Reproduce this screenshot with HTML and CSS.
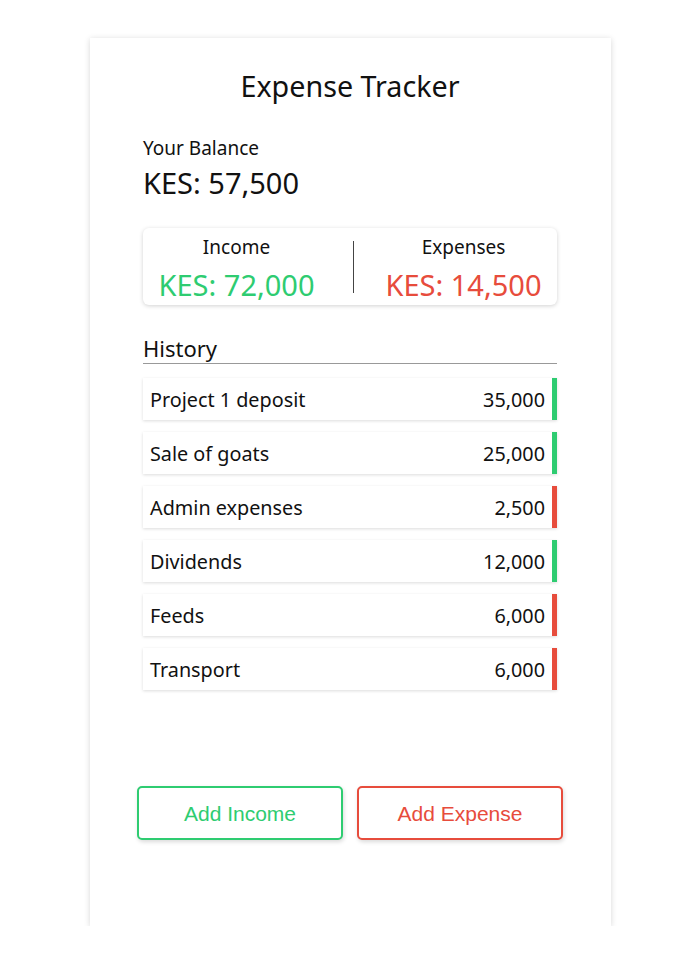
FILE: index.html
```html
<!DOCTYPE html>
<html lang="en">
<head>
<meta charset="utf-8">
<title>Expense Tracker</title>
<link rel="stylesheet" href="styles.css">
</head>
<body>
<div class="card">
  <h2 class="title">Expense Tracker</h2>
  <div class="balance-label">Your Balance</div>
  <div class="balance">KES: 57,500</div>
  <div class="summary">
    <div class="summary-col">
      <div class="summary-label">Income</div>
      <div class="summary-value plus">KES: 72,000</div>
    </div>
    <div class="divider"></div>
    <div class="summary-col">
      <div class="summary-label">Expenses</div>
      <div class="summary-value minus">KES: 14,500</div>
    </div>
  </div>
  <h3 class="history">History</h3>
  <ul class="list">
    <li class="item plus-item"><span>Project 1 deposit</span><span>35,000</span></li>
    <li class="item plus-item"><span>Sale of goats</span><span>25,000</span></li>
    <li class="item minus-item"><span>Admin expenses</span><span>2,500</span></li>
    <li class="item plus-item"><span>Dividends</span><span>12,000</span></li>
    <li class="item minus-item"><span>Feeds</span><span>6,000</span></li>
    <li class="item minus-item"><span>Transport</span><span>6,000</span></li>
  </ul>
  <div class="actions">
    <button class="btn btn-income">Add Income</button>
    <button class="btn btn-expense">Add Expense</button>
  </div>
</div>
</body>
</html>
```
FILE: styles.css
```css
* { box-sizing: border-box; }
body {
  margin: 0;
  background: #fff;
  font-family: "Noto Sans", "Open Sans", sans-serif;
  color: #111;
}
.card {
  width: 521px;
  height: 888px;
  margin: 38px 0 0 90px;
  padding: 30px 54px 0 53px;
  background: #fff;
  box-shadow: 0 1px 6px rgba(0,0,0,0.16);
}
.title {
  margin: 0;
  font-size: 28.7px;
  font-weight: 400;
  line-height: 36px;
  text-align: center;
}
.balance-label {
  margin-top: 32px;
  font-size: 19px;
  line-height: 24px;
}
.balance {
  margin-top: 5px;
  font-size: 29px;
  line-height: 36px;
}
.summary {
  margin-top: 27px;
  height: 77px;
  display: flex;
  justify-content: space-around;
  align-items: center;
  background: #fff;
  border-radius: 6px;
  box-shadow: 0 1px 4px rgba(0,0,0,0.18);
}
.summary-col {
  text-align: center;
  display: flex;
  flex-direction: column;
  gap: 8px;
  padding-top: 4px;
}
.summary-label {
  font-size: 19px;
  line-height: 24px;
}
.summary-value {
  font-size: 29px;
  line-height: 36px;
}
.divider {
  width: 1px;
  height: 52px;
  margin-left: 8px;
  background: #444;
}
.plus { color: #2ecc71; }
.minus { color: #e74c3c; }
.history {
  margin: 28px 0 0;
  font-size: 22px;
  font-weight: 400;
  line-height: 30px;
  border-bottom: 1px solid #999;
}
.list {
  list-style: none;
  margin: 14px 0 0;
  padding: 0;
  display: flex;
  flex-direction: column;
  gap: 12px;
}
.item {
  height: 42px;
  display: flex;
  justify-content: space-between;
  align-items: center;
  padding: 0 7px;
  font-size: 19.8px;
  background: #fff;
  box-shadow: 0 1px 3px rgba(0,0,0,0.14);
}
.plus-item { border-right: 5px solid #2ecc71; }
.minus-item { border-right: 5px solid #e74c3c; }
.actions {
  margin: 96px -6px 0;
  display: flex;
  gap: 14px;
}
.btn {
  flex: 1;
  height: 54px;
  padding: 2px 0 0;
  background: #fff;
  border-radius: 5px;
  font-family: "Liberation Sans", Arial, sans-serif;
  font-size: 21px;
  line-height: 48px;
  box-shadow: 1px 2px 4px rgba(0,0,0,0.15);
}
.btn-income { border: 2px solid #2ecc71; color: #2ecc71; }
.btn-expense { border: 2px solid #e74c3c; color: #e74c3c; }
```
